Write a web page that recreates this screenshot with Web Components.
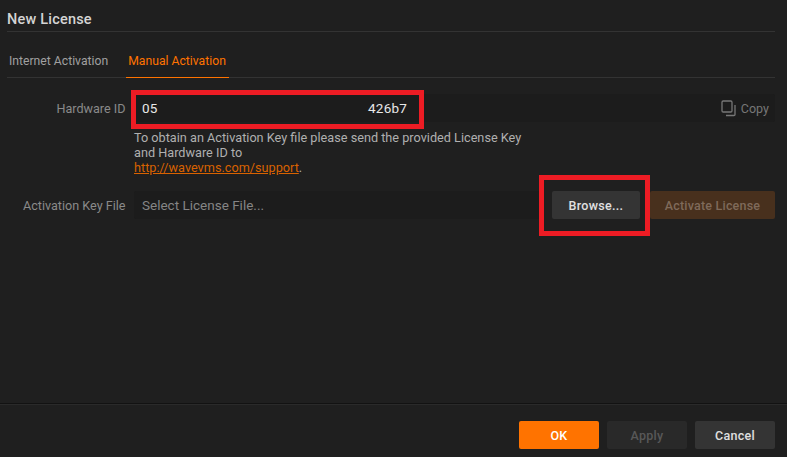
<!DOCTYPE html>
<html>
<head>
<meta charset="utf-8">
<title>New License</title>
<style>
html, body { margin: 0; height: 100%; background: #1f1f1f; overflow: hidden; }
body { font-family: Roboto, "Liberation Sans", sans-serif; }
</style>
</head>
<body>
<license-dialog></license-dialog>

<script>
class UiButton extends HTMLElement {
    constructor() {
        super();
        this.attachShadow({ mode: 'open' });
        this.shadowRoot.innerHTML = `
        <style>
            :host {
                display: flex;
                align-items: center;
                justify-content: center;
                box-sizing: border-box;
                width: 80px;
                height: 28px;
                flex: none;
                border-radius: 2px;
                background: #343434;
                color: #e0e0e0;
                font-size: 12.5px;
                font-weight: 500;
                letter-spacing: 0.3px;
            }
            :host([kind="primary"]) { background: #ff7300; color: #fff; }
            :host([kind="disabled"]) { background: #292929; color: #585858; }
            :host([kind="brown"]) { background: #48301d; color: #7f6a5a; letter-spacing: 0.2px; }
        </style>
        <slot></slot>
        `;
    }
}

class TabBar extends HTMLElement {
    constructor() {
        super();
        this.attachShadow({ mode: 'open' });
        this.shadowRoot.innerHTML = `
        <style>
            :host {
                display: flex;
                box-sizing: border-box;
                height: 46px;
                margin: 0 12px 0 7px;
                border-bottom: 1px solid #333;
                font-size: 12.2px;
                line-height: 14px;
                color: #a0a0a0;
            }
            .tab { padding: 22px 18px 0 2px; }
            .active {
                color: #ff7300;
                box-sizing: border-box;
                padding: 22px 0 0 2px;
                width: 103px;
                height: 46px;
                border-bottom: 1px solid #ff7300;
            }
        </style>
        <div class="tab">Internet Activation</div>
        <div class="tab active">Manual Activation</div>
        `;
    }
}

class FormRow extends HTMLElement {
    constructor() {
        super();
        this.attachShadow({ mode: 'open' });
        this.shadowRoot.innerHTML = `
        <style>
            :host {
                display: flex;
                align-items: center;
                height: 28px;
                font-size: 12.6px;
                padding-right: 12px;
            }
            .label {
                width: 125.5px;
                margin-right: 8.5px;
                text-align: right;
                color: #8a8a8a;
                flex: none;
                white-space: nowrap;
            }
            .body { flex: 1; display: flex; height: 100%; min-width: 0; }
        </style>
        <div class="label"></div>
        <div class="body"><slot></slot></div>
        `;
    }
    connectedCallback() {
        this.shadowRoot.querySelector('.label').textContent = this.getAttribute('label') || '';
    }
}

class HardwareField extends HTMLElement {
    constructor() {
        super();
        this.attachShadow({ mode: 'open' });
        this.shadowRoot.innerHTML = `
        <style>
            :host {
                display: flex;
                align-items: center;
                flex: 1;
                box-sizing: border-box;
                background: #1c1c1c;
                border-radius: 2px;
                padding: 0 6px 0 8px;
                font-size: 13.5px;
                color: #e8e8e8;
                letter-spacing: 0.2px;
            }
            .tail { margin-left: 210.5px; }
            .copy {
                margin-left: auto;
                display: flex;
                align-items: center;
                gap: 4px;
                color: #777;
                font-size: 12.5px;
                letter-spacing: 0;
            }
            svg { display: block; }
        </style>
        <span>05</span><span class="tail">426b7</span>
        <span class="copy">
            <svg width="16" height="17" viewBox="0 0 16 17" fill="none" stroke="#777" stroke-width="1.3">
                <rect x="1" y="1" width="10" height="11" rx="1.2"/>
                <path d="M14 5v9.5a1 1 0 0 1-1 1H5"/>
            </svg>
            Copy
        </span>
        `;
    }
}

class FileField extends HTMLElement {
    constructor() {
        super();
        this.attachShadow({ mode: 'open' });
        this.shadowRoot.innerHTML = `
        <style>
            :host {
                display: flex;
                align-items: center;
                flex: 1;
                box-sizing: border-box;
                background: #1c1c1c;
                border-radius: 2px;
                padding-left: 8px;
                font-size: 13.5px;
                color: #858585;
                margin-right: 10px;
            }
        </style>
        <slot></slot>
        `;
    }
}

class LicenseDialog extends HTMLElement {
    constructor() {
        super();
        this.attachShadow({ mode: 'open' });
        this.shadowRoot.innerHTML = `
        <style>
            :host {
                display: flex;
                flex-direction: column;
                position: relative;
                width: 787px;
                height: 457px;
                background: #1f1f1f;
                font-family: Roboto, "Liberation Sans", sans-serif;
                overflow: hidden;
            }
            .title {
                height: 32px;
                box-sizing: border-box;
                margin: 0 12px 0 7px;
                padding-top: 11px;
                border-bottom: 1px solid #333;
                font-size: 14.5px;
                line-height: 17px;
                font-weight: 500;
                color: #d4d4d4;
                letter-spacing: 0.2px;
            }
            .content { flex: 1; padding-top: 16px; }
            .hint {
                margin: 8px 0 16px 134px;
                font-size: 12.7px;
                line-height: 15px;
                color: #b0b0b0;
            }
            .hint a { color: #d96200; text-decoration: underline; }
            .footer {
                height: 54px;
                box-sizing: border-box;
                border-top: 1px solid #121212;
                box-shadow: inset 0 1px 0 #2a2a2a;
                display: flex;
                justify-content: flex-end;
                gap: 8px;
                padding: 17px 12px 0 0;
            }
            .mark {
                position: absolute;
                box-sizing: border-box;
                border: 5px solid #ed1c24;
            }
            .browse { width: 88px; }
            .activate { margin-left: 10px; width: 125px; }
        </style>
        <div class="title">New License</div>
        <tab-bar></tab-bar>
        <div class="content">
            <form-row label="Hardware ID"><hardware-field></hardware-field></form-row>
            <div class="hint">To obtain an Activation Key file please send the provided License Key<br>and Hardware ID to<br><a>http://wavevms.com/support</a>.</div>
            <form-row label="Activation Key File">
                <file-field>Select License File...</file-field>
                <ui-button class="browse">Browse...</ui-button>
                <ui-button class="activate" kind="brown">Activate License</ui-button>
            </form-row>
        </div>
        <div class="footer">
            <ui-button kind="primary">OK</ui-button>
            <ui-button kind="disabled">Apply</ui-button>
            <ui-button>Cancel</ui-button>
        </div>
        <div class="mark" style="left:131px;top:90px;width:293px;height:39px"></div>
        <div class="mark" style="left:539px;top:175px;width:111px;height:61px"></div>
        `;
    }
}

customElements.define('ui-button', UiButton);
customElements.define('tab-bar', TabBar);
customElements.define('form-row', FormRow);
customElements.define('hardware-field', HardwareField);
customElements.define('file-field', FileField);
customElements.define('license-dialog', LicenseDialog);
</script>
</body>
</html>
